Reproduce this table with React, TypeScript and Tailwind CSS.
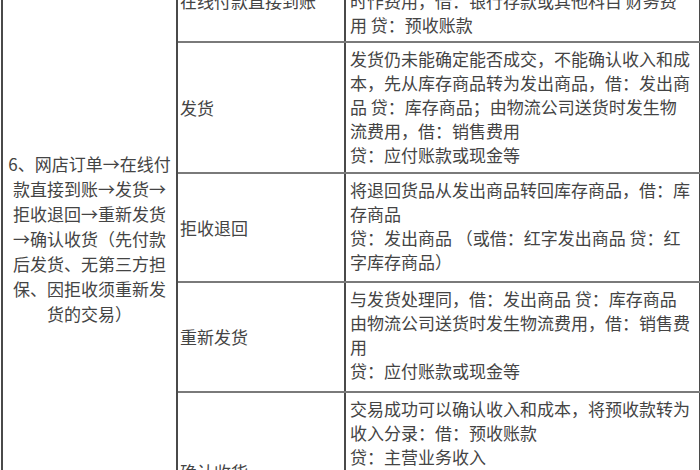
import React from "react";

type Row = {
  label: string;
  lines: string[];
  height: string;
};

const rows: Row[] = [
  {
    label: "在线付款直接到账",
    lines: [
      "在线付款直接到账，借：银行存款，手续费同",
      "时作费用，借：银行存款或其他科目 财务费",
      "用 贷：预收账款",
    ],
    height: "h-[82px]",
  },
  {
    label: "发货",
    lines: [
      "发货仍未能确定能否成交，不能确认收入和成",
      "本，先从库存商品转为发出商品，借：发出商",
      "品 贷：库存商品；由物流公司送货时发生物",
      "流费用，借：销售费用",
      "贷：应付账款或现金等",
    ],
    height: "h-[131px]",
  },
  {
    label: "拒收退回",
    lines: [
      "将退回货品从发出商品转回库存商品，借：库",
      "存商品",
      "贷：发出商品 （或借：红字发出商品 贷：红",
      "字库存商品）",
    ],
    height: "h-[109px]",
  },
  {
    label: "重新发货",
    lines: [
      "与发货处理同，借：发出商品 贷：库存商品",
      "由物流公司送货时发生物流费用，借：销售费",
      "用",
      "贷：应付账款或现金等",
    ],
    height: "h-[110px]",
  },
  {
    label: "确认收货",
    lines: [
      "交易成功可以确认收入和成本，将预收款转为",
      "收入分录：借：预收账款",
      "贷：主营业务收入",
      "同时结转成本，借：主营业务成本",
      "贷：发出商品",
    ],
    height: "h-[160px]",
  },
];

const leftLines = [
  "6、网店订单→在线付",
  "款直接到账→发货→",
  "拒收退回→重新发货",
  "→确认收货（先付款",
  "后发货、无第三方担",
  "保、因拒收须重新发",
  "货的交易）",
];

export default function App() {
  return (
    <div
      className="w-[700px] h-[470px] overflow-hidden bg-white text-[17px] text-[#444]"
      style={{ fontFamily: '"Noto Sans CJK SC", "Noto Sans", sans-serif' }}
    >
      <table className="-mt-[41px] ml-[1px] w-[698px] table-fixed border-collapse">
        <colgroup>
          <col className="w-[175px]" />
          <col className="w-[168px]" />
          <col className="w-[355px]" />
        </colgroup>
        <tbody>
          {rows.map((row, i) => (
            <tr key={row.label} className={row.height}>
              {i === 0 && (
                <td
                  rowSpan={rows.length}
                  className="border-2 border-[#4a4a4a] align-top pt-[190px] text-center leading-[25px]"
                >
                  {leftLines.map((l) => (
                    <div key={l} className="whitespace-nowrap">
                      {l}
                    </div>
                  ))}
                </td>
              )}
              <td className="border-2 border-y-[#7a7a7a] border-x-[#4a4a4a] align-middle pl-[2px] leading-[24px] whitespace-nowrap">
                {row.label}
              </td>
              <td className="border-2 border-y-[#7a7a7a] border-x-[#4a4a4a] align-top pt-[4px] pl-[4px] leading-[24px]">
                {row.lines.map((l, j) => (
                  <div key={j} className="whitespace-nowrap">
                    {l}
                  </div>
                ))}
              </td>
            </tr>
          ))}
        </tbody>
      </table>
    </div>
  );
}
